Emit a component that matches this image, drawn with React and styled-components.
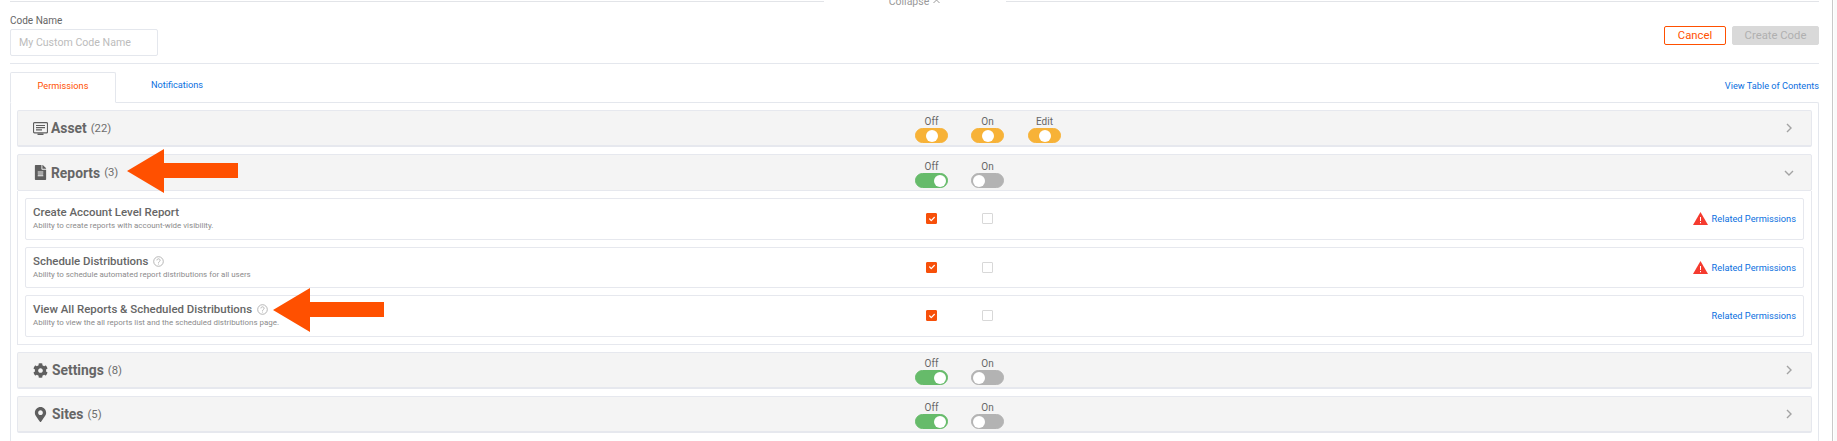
import React from 'react';
import styled, { createGlobalStyle } from 'styled-components';
import { FaFileAlt, FaCog, FaMapMarkerAlt, FaCheck } from 'react-icons/fa';

const GlobalStyle = createGlobalStyle`
    html, body {
        margin: 0;
        padding: 0;
        background: #fff;
        overflow: hidden;
    }
    body {
        font-family: Roboto, "Liberation Sans", Arial, sans-serif;
        color: #5f5f5f;
    }
`;

const Page = styled.div`
    width: 1837px;
    height: 441px;
    box-sizing: border-box;
    overflow: hidden;
    position: relative;
    border-right: 3px solid #fafafa;
`;

const ScrollEdge = styled.div`
    position: absolute;
    top: 0;
    right: 1px;
    bottom: 0;
    width: 1px;
    background: #c9c9c9;
`;

const Content = styled.div`
    width: 1809px;
    margin-left: 10px;
`;

const CollapseBar = styled.div`
    height: 2px;
    display: flex;
    align-items: flex-start;
`;

const TopLine = styled.div`
    flex: 1;
    height: 1px;
    margin-top: 1px;
    background: #e2e4e8;
`;

const CollapseLabel = styled.div`
    width: 182px;
    height: 4px;
    display: flex;
    justify-content: center;
    align-items: flex-end;
    gap: 4px;
    font-size: 10.5px;
    line-height: 4px;
    color: #9a9a9a;
    white-space: nowrap;
    position: relative;
`;

const CollapseCaret = styled.svg`
    width: 7px;
    height: 5px;
    fill: none;
    stroke: #9a9a9a;
    stroke-width: 1;
`;

const CodeRow = styled.div`
    height: 62px;
    box-sizing: border-box;
    border-bottom: 1px solid #e4e7ed;
    display: flex;
    justify-content: space-between;
    padding-top: 13px;
`;

const FieldLabel = styled.div`
    font-size: 10px;
    line-height: 12px;
    color: #666;
    margin-bottom: 2px;
`;

const TextInput = styled.div`
    width: 148px;
    height: 27px;
    box-sizing: border-box;
    border: 1px solid #e4e7ed;
    border-radius: 2px;
    padding: 0 8px;
    font-size: 10.6px;
    line-height: 25px;
    color: #bcbcbc;
`;

const Actions = styled.div`
    display: flex;
    gap: 6px;
    padding-top: 11px;
`;

const ActionButton = styled.div`
    height: 19px;
    box-sizing: border-box;
    width: ${props => props.w}px;
    border-radius: 2px;
    font-size: 11.3px;
    line-height: 17px;
    text-align: center;
    color: ${props => props.primary ? '#ff5000' : '#b0b0b0'};
    border: 1px solid ${props => props.primary ? '#ff5000' : '#d9d9d9'};
    background: ${props => props.primary ? '#fff' : '#d9d9d9'};
`;

const TabRow = styled.div`
    height: 38px;
    padding-top: 7px;
    box-sizing: border-box;
    display: flex;
    align-items: flex-end;
    position: relative;
    z-index: 1;
`;

const Tab = styled.div`
    width: ${props => props.active ? '106px' : '122px'};
    height: 31px;
    box-sizing: border-box;
    font-size: 9.2px;
    line-height: ${props => props.active ? '26px' : '24px'};
    text-align: center;
    color: ${props => props.active ? '#ff5000' : '#0b6fe0'};
    border: 1px solid ${props => props.active ? '#e4e7ed' : 'transparent'};
    border-bottom: 1px solid ${props => props.active ? '#fff' : 'transparent'};
    border-radius: 2px 2px 0 0;
    margin-bottom: -1px;
`;

const TocLink = styled.div`
    margin-left: auto;
    font-size: 9.2px;
    line-height: 12px;
    color: #0b6fe0;
    align-self: flex-start;
    padding-top: 9px;
`;

const Panel = styled.div`
    border: 1px solid #e4e7ed;
    border-bottom: none;
    border-radius: 2px 2px 0 0;
    padding: 7px 6px 0;
    display: flex;
    flex-direction: column;
    gap: 7px;
    height: 341px;
    box-sizing: border-box;
`;

const Section = styled.div`
    display: flex;
    flex-direction: column;
`;

const SectionHeader = styled.div`
    height: 37px;
    flex-shrink: 0;
    box-sizing: border-box;
    background: #f4f4f4;
    border: 1px solid #e6e8ee;
    border-bottom-width: ${props => props.open ? '1px' : '2px'};
    border-radius: 2px;
    display: grid;
    grid-template-columns: 897px 56px 57px 1fr auto;
    align-items: center;
    padding-right: 17px;
`;

const SectionTitle = styled.div`
    display: flex;
    align-items: center;
    padding-left: 14px;
    font-size: 13.85px;
    font-weight: 700;
    color: #666;
`;

const IconSlot = styled.span`
    width: 16px;
    display: flex;
    justify-content: center;
    margin-right: ${props => props.gap}px;
    color: #5f5f5f;
`;

const Count = styled.span`
    font-size: 11.3px;
    font-weight: 400;
    margin-left: 4px;
    color: #6e6e6e;
`;

const ToggleCell = styled.div`
    display: flex;
    flex-direction: column;
    align-items: center;
    width: 33px;
    align-self: end;
    margin-bottom: 2px;
`;

const ToggleLabel = styled.div`
    font-size: 10px;
    line-height: 12px;
    color: #666;
`;

const ToggleTrack = styled.div`
    width: 33px;
    height: 15px;
    box-sizing: border-box;
    border-radius: 8px;
    padding: 1px;
    display: flex;
    justify-content: ${props => props.pos === 'right' ? 'flex-end' : props.pos === 'left' ? 'flex-start' : 'center'};
    background: ${props => props.color};
    border: 1px solid ${props => props.color};
`;

const ToggleKnob = styled.div`
    width: 12px;
    height: 12px;
    margin-top: -0.5px;
    border-radius: 50%;
    background: #fff;
`;

const Chevron = styled.svg`
    width: 10px;
    height: 10px;
    grid-column: 5;
    fill: none;
    stroke: #a3a3a3;
    stroke-width: 1.4;
`;

const SectionBody = styled.div`
    border: 1px solid #e6e8ee;
    border-top: none;
    padding: 7px 7px 7.75px;
    display: flex;
    flex-direction: column;
    gap: 7px;
`;

const PermissionRow = styled.div`
    height: 41.5px;
    box-sizing: border-box;
    border: 1px solid #e6e8ee;
    border-radius: 2px;
    display: grid;
    grid-template-columns: 900px 56px 1fr auto;
    align-items: center;
    padding-right: 7px;
`;

const PermissionText = styled.div`
    padding-left: 7px;
`;

const PermissionTitle = styled.div`
    font-size: 11.45px;
    font-weight: 500;
    line-height: 13px;
    color: #666;
    display: flex;
    align-items: center;
`;

const PermissionDesc = styled.div`
    font-size: 7.95px;
    line-height: 10px;
    margin-top: 2px;
    color: #8c8c8c;
`;

const HelpIcon = styled.svg`
    width: 11px;
    height: 11px;
    margin-left: 5px;
    fill: none;
    stroke: #a5a5a5;
`;

const Check = styled.div`
    width: 11px;
    height: 11px;
    box-sizing: border-box;
    border-radius: 1px;
    display: flex;
    align-items: center;
    justify-content: center;
    color: #fff;
    font-size: 6px;
    background: ${props => props.checked ? '#f7500a' : '#fff'};
    border: 1px solid ${props => props.checked ? '#f7500a' : '#d8d8d8'};
`;

const RelatedCell = styled.div`
    grid-column: 4;
    display: flex;
    align-items: center;
    gap: 4px;
    font-size: 9.25px;
    color: #0b6fe0;
`;

const WarnIcon = styled.svg`
    width: 15px;
    height: 13px;
`;

const Arrow = styled.svg`
    position: absolute;
    left: ${props => props.x}px;
    top: ${props => props.y}px;
    width: 111px;
    height: 44px;
    fill: #ff5000;
`;

const Toggle = ({ label, color, pos }) => (
    <ToggleCell>
        <ToggleLabel>{label}</ToggleLabel>
        <ToggleTrack color={color} pos={pos}><ToggleKnob /></ToggleTrack>
    </ToggleCell>
);

const AMBER = '#f7b237';
const GREEN = '#66bb6a';
const GRAY = '#b3b3b3';

const ChevronRight = () => (
    <Chevron viewBox="0 0 10 10"><path d="M3 1l4 4-4 4" /></Chevron>
);

const ChevronDown = () => (
    <Chevron viewBox="0 0 10 10"><path d="M1 3l4 4 4-4" /></Chevron>
);

const Help = () => (
    <HelpIcon viewBox="0 0 11 11">
        <circle cx="5.5" cy="5.5" r="4.8" strokeWidth="0.8" />
        <path d="M3.9 4.4c0-2.1 3.2-2.1 3.2 0 0 1.2-1.6 1.2-1.6 2.4M5.5 7.6v.9" strokeWidth="0.8" />
    </HelpIcon>
);

const Warn = () => (
    <WarnIcon viewBox="0 0 15 13">
        <path d="M7.5 0L15 13H0z" fill="#f53b2f" />
        <path d="M7 5h1v4H7zM7 10h1v1.2H7z" fill="#fff" />
    </WarnIcon>
);

const MonitorIcon = () => (
    <svg width="15" height="13" viewBox="0 0 15 13">
        <path d="M1.5.6h12a1 1 0 0 1 1 1v8.2a1 1 0 0 1-1 1h-12a1 1 0 0 1-1-1V1.600a1 1 0 0 1 1-1z" fill="none" stroke="#5f5f5f" strokeWidth="1.2" />
        <path d="M3 3.500h9M3 5.700h9M3 7.900h6" stroke="#5f5f5f" strokeWidth="1.2" />
        <path d="M4.500 11.500h6V13h-6z" fill="#5f5f5f" />
    </svg>
);

const permissions = [
    { title: 'Create Account Level Report', desc: 'Ability to create reports with account-wide visibility.', warn: true },
    { title: 'Schedule Distributions', desc: 'Ability to schedule automated report distributions for all users', warn: true, help: true },
    { title: 'View All Reports & Scheduled Distributions', desc: 'Ability to view the all reports list and the scheduled distributions page.', help: true },
];

const ArrowShape = ({ x, y }) => (
    <Arrow x={x} y={y} viewBox="0 0 111 44">
        <path d="M0 22L37 0v14h74v15H37v15z" />
    </Arrow>
);

const SimpleSection = ({ icon, name, count }) => (
    <SectionHeader>
        <SectionTitle><IconSlot gap={4}>{icon}</IconSlot>{name}<Count>({count})</Count></SectionTitle>
        <Toggle label="Off" color={GREEN} pos="right" />
        <Toggle label="On" color={GRAY} pos="left" />
        <ChevronRight />
    </SectionHeader>
);

const App = () => (
    <Page>
        <GlobalStyle />
        <ScrollEdge />
        <Content>
            <CollapseBar>
                <TopLine />
                <CollapseLabel>
                    Collapse
                    <CollapseCaret viewBox="0 0 7 5"><path d="M.5 4L3.500 1l3 3" /></CollapseCaret>
                </CollapseLabel>
                <TopLine />
            </CollapseBar>
            <CodeRow>
                <div>
                    <FieldLabel>Code Name</FieldLabel>
                    <TextInput>My Custom Code Name</TextInput>
                </div>
                <Actions>
                    <ActionButton primary w={62}>Cancel</ActionButton>
                    <ActionButton w={87}>Create Code</ActionButton>
                </Actions>
            </CodeRow>
            <TabRow>
                <Tab active>Permissions</Tab>
                <Tab>Notifications</Tab>
                <TocLink>View Table of Contents</TocLink>
            </TabRow>
            <Panel>
                <SectionHeader>
                    <SectionTitle><IconSlot gap={3}><MonitorIcon /></IconSlot>Asset<Count>(22)</Count></SectionTitle>
                    <Toggle label="Off" color={AMBER} />
                    <Toggle label="On" color={AMBER} />
                    <Toggle label="Edit" color={AMBER} />
                    <ChevronRight />
                </SectionHeader>
                <Section>
                    <SectionHeader open>
                        <SectionTitle><IconSlot gap={3}><FaFileAlt size={15} /></IconSlot>Reports<Count>(3)</Count></SectionTitle>
                        <Toggle label="Off" color={GREEN} pos="right" />
                        <Toggle label="On" color={GRAY} pos="left" />
                        <ChevronDown />
                    </SectionHeader>
                    <SectionBody>
                        {permissions.map((item, key) => (
                            <PermissionRow key={key}>
                                <PermissionText>
                                    <PermissionTitle>{item.title}{item.help && <Help />}</PermissionTitle>
                                    <PermissionDesc>{item.desc}</PermissionDesc>
                                </PermissionText>
                                <Check checked><FaCheck /></Check>
                                <Check />
                                <RelatedCell>
                                    {item.warn && <Warn />}
                                    Related Permissions
                                </RelatedCell>
                            </PermissionRow>
                        ))}
                    </SectionBody>
                </Section>
                <SimpleSection icon={<FaCog size={15} />} name="Settings" count={8} />
                <SimpleSection icon={<FaMapMarkerAlt size={15} />} name="Sites" count={5} />
            </Panel>
        </Content>
        <ArrowShape x={127} y={149} />
        <ArrowShape x={273} y={288} />
    </Page>
);

export default App;
